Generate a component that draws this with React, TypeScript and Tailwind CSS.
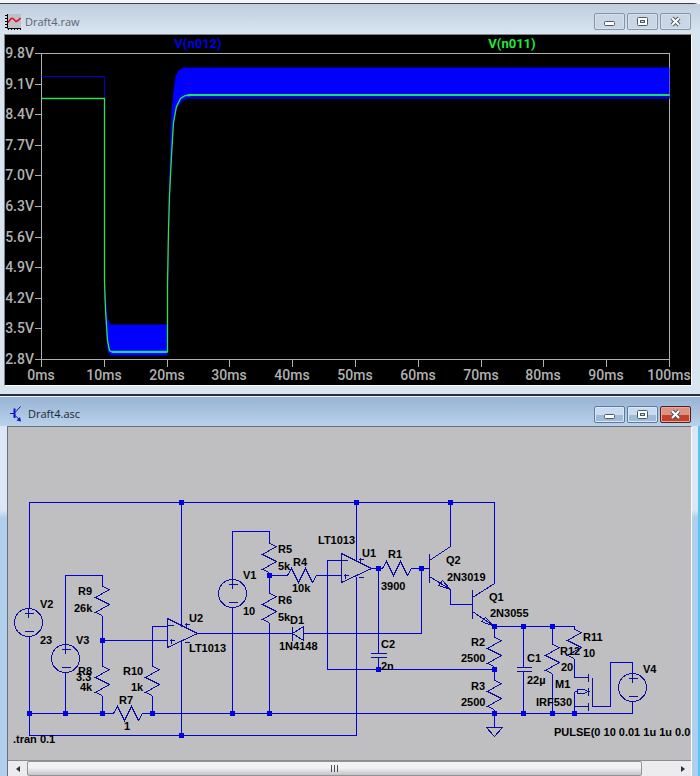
import * as React from 'react';

type ChromeProps = {
  title: string;
  icon: React.ReactNode;
  active?: boolean;
};

const WaveIcon = () => (
  <svg width="16" height="16" viewBox="0 0 16 16" aria-hidden="true">
    <rect x="2" y="0" width="14" height="14" fill="#c0c0c4" />
    <path d="M2.5 0V14.5H16" fill="none" stroke="#000" />
    <path d="M0 1.5H2M0 4.5H2M0 7.5H2M0 10.5H2M0 13.5H2M3.5 14V16M6.5 14V16M9.5 14V16M12.5 14V16M15.5 14V16" stroke="#000" />
    <path d="M3 8.5L6 4.5L8 4.5L11 7.5L13 6.5L15.5 4" fill="none" stroke="#d8142c" strokeWidth="1.6" />
  </svg>
);

const TransistorIcon = () => (
  <svg width="16" height="16" viewBox="0 0 16 16" aria-hidden="true">
    <path d="M2 7.5H6" stroke="#1010c8" />
    <path d="M6.5 2.5V12" stroke="#1010c8" strokeWidth="2" />
    <path d="M7 6.5L12.5 0.5M7 9.5L12 14" stroke="#1010c8" fill="none" />
    <path d="M13 15.5L8.5 14.5L12 11Z" fill="#1010c8" />
  </svg>
);

const TitleBar = ({ title, icon, active }: ChromeProps) => {
  const button = active
    ? 'flex h-[17px] w-[31px] items-center justify-center rounded-[2px] border border-[#60799b] bg-linear-to-b from-[#c9dbef] from-50% to-[#9fbbdb] to-50% shadow-[inset_0_0_0_1px_#dbe8f6]'
    : 'flex h-[17px] w-[31px] items-center justify-center rounded-[2px] border border-[#8695a9] bg-[#c8d6e5] shadow-[inset_0_0_0_1px_#d5e0ec]';
  const close = active
    ? 'flex h-[17px] w-[31px] items-center justify-center rounded-[2px] border border-[#5c1a1c] bg-linear-to-b from-[#dd9384] from-50% to-[#c4412a] to-50% shadow-[inset_0_0_0_1px_#e5a99c]'
    : button;
  return (
    <header className={active
      ? 'flex h-[29px] items-center bg-linear-to-b from-[#98b4d4] to-[#b9d1ea] pt-[5px] pl-2 pr-[9px]'
      : 'flex h-[30px] items-center bg-linear-to-b from-[#bfcddd] to-[#d9e5f1] pt-[5px] pl-[5px] pr-[9px]'}
    >
      {icon}
      <h1 className={active
        ? "ml-1 flex-1 text-[11px] leading-4 font-['Open_Sans',sans-serif] text-[#1c2633]"
        : "ml-1 flex-1 text-[11px] leading-4 font-['Open_Sans',sans-serif] text-[#5a6570]"}
      >
        {title}
      </h1>
      <div className="flex gap-[2px]">
        <button className={button} aria-label="Minimize">
          <svg width="13" height="11" viewBox="0 0 13 11">
            <rect x="1.5" y="5.5" width="10" height="4" rx="1" fill="#fff" stroke="#4f5866" />
          </svg>
        </button>
        <button className={button} aria-label="Maximize">
          <svg width="13" height="11" viewBox="0 0 13 11">
            <rect x="1.5" y="1.5" width="10" height="8" rx="1" fill="#fff" stroke="#4f5866" />
            <rect x="4.5" y="4.5" width="4" height="2" fill="#c8d6e5" stroke="#4f5866" />
          </svg>
        </button>
        <button className={close} aria-label="Close">
          <svg width="13" height="11" viewBox="0 0 13 11">
            <path d="M3 2L10 9M10 2L3 9" stroke="#4f5866" strokeWidth="4" />
            <path d="M3 2L10 9M10 2L3 9" stroke="#fff" strokeWidth="2" />
          </svg>
        </button>
      </div>
    </header>
  );
};

const volts = ['9.8V', '9.1V', '8.4V', '7.7V', '7.0V', '6.3V', '5.6V', '4.9V', '4.2V', '3.5V', '2.8V'];
const times = ['0ms', '10ms', '20ms', '30ms', '40ms', '50ms', '60ms', '70ms', '80ms', '90ms', '100ms'];

const Plot = () => (
  <svg
    viewBox="5 35 686 350"
    className="block h-auto w-full bg-black font-['Roboto',sans-serif] font-medium"
    role="img"
    aria-label="V(n012) and V(n011) over time"
  >
    <g fontSize="14" fill="#b0b0b0">
      {volts.map((v, i) => (
        <text key={v} x="34" y={Math.round(58 + i * 30.6)} textAnchor="end">{v}</text>
      ))}
      {times.map((t, i) => (
        <text key={t} x={Math.round(41 + i * 62.8)} y="380" textAnchor="middle">{t}</text>
      ))}
    </g>
    <g fontSize="13" fontWeight="bold">
      <text x="198" y="48" textAnchor="middle" fill="#0000e0">V(n012)</text>
      <text x="512" y="48" textAnchor="middle" fill="#22e53c">V(n011)</text>
    </g>
    <g transform="translate(.5 .5)" fill="none">
      <g stroke="#b0b0b0" shapeRendering="crispEdges">
        <rect x="41" y="53" width="628" height="306" />
        {volts.map((v, i) => (
          <path key={v} d={`M34 ${Math.round(53 + i * 30.6)}H41`} />
        ))}
        {times.map((t, i) => (
          <path key={t} d={`M${Math.round(41 + i * 62.8)} 359V366`} />
        ))}
      </g>
      <path d="M41 76H104V300" stroke="#0000d0" />
      <path d="M105 290L107 318L110 324H167V355H110L107 351L105 320Z" fill="#0000ff" />
      <path d="M167 320L168 200L171 110L173 90L175 76L178 70L183 67H669V98H188L182 100L176 108L173 125L171 160L169 200Z" fill="#0000ff" />
      <path d="M190 97H669" stroke="#0000c4" strokeWidth="3" />
      <path d="M41 98H104V280L105 310L107 340L109 350L111 351H167V284L168 230L169 195L171 155L173 122L176 106L180 98L185 95L190 95" stroke="#2fe04c" strokeWidth="1.3" />
      <path d="M111 351.5H167" stroke="#14d894" strokeWidth="2" />
      <path d="M187 94.5H669" stroke="#16e05c" strokeWidth="2" />
    </g>
  </svg>
);

const ResistorV = ({ x, y }: { x: number; y: number }) => (
  <path d={`M${x} ${y}l7 3l-14 8l14 7l-14 8l7 3`} />
);

const ResistorH = ({ x, y }: { x: number; y: number }) => (
  <path d={`M${x} ${y}l4 -7l7 14l7 -14l7 14l4 -7`} />
);

const Source = ({ x, y }: { x: number; y: number }) => (
  <g>
    <circle cx={x} cy={y} r="14" />
    <path d={`M${x - 4} ${y - 9}h9M${x} ${y - 14}v9M${x - 4} ${y + 9}h9`} />
  </g>
);

// x, y is the top left corner of the triangle
const OpAmp = ({ x, y }: { x: number; y: number }) => (
  <g>
    <path d={`M${x} ${y}v29l30 -14Z`} />
    <path d={`M${x} ${y + 7}h6M${x + 2} ${y + 22}h5M${x + 4} ${y + 20}v5`} />
    <path d={`M${x + 17} ${y + 6}h5M${x + 19} ${y + 4}v5M${x + 17} ${y + 24}h5`} />
  </g>
);

const wires = [
  'M29 608V502H494V583',
  'M29 636V735H356V576',
  'M29 713H113M142 713H632V701',
  'M65 644V575H102V586M65 672V713',
  'M102 615V666M102 640H167M102 695V713',
  'M167 626H152V666M152 695V713',
  'M181 502V626M181 641V735',
  'M197 633H292M303 633H421V568',
  'M232 579V531H269V543M232 607V713',
  'M269 572V593M269 622V713M269 575H287',
  'M316 575H341M341 560H327V669H494',
  'M356 502V560M371 568H382M411 568H429',
  'M378 568V653M378 657V669',
  'M450 502V546M450 589V604H472',
  'M494 626V637M494 666V680M494 709V727',
  'M494 626H574V629M523 626V667M523 671V713',
  'M552 626V644M552 673V713',
  'M574 658V677M574 691V713',
  'M592 706H610V662H632V673',
];

const nodes = [
  [181, 502], [356, 502], [450, 502], [269, 575], [102, 640], [378, 568], [421, 568],
  [378, 669], [494, 669], [494, 626], [523, 626], [552, 626], [29, 713], [65, 713],
  [102, 713], [152, 713], [232, 713], [269, 713], [494, 713], [523, 713], [552, 713],
  [574, 713], [181, 735],
];

type Label = [string, number, number];

const labels: Label[] = [
  ['V2', 40, 608], ['23', 40, 644],
  ['R9', 78, 595], ['26k', 74, 612],
  ['V3', 76, 644], ['3.3', 76, 681],
  ['R8', 78, 675], ['4k', 80, 691],
  ['R10', 123, 675], ['1k', 131, 691],
  ['R7', 119, 704], ['1', 124, 730],
  ['.tran 0.1', 13, 743],
  ['U2', 189, 622], ['LT1013', 189, 652],
  ['V1', 243, 579], ['10', 243, 615],
  ['R5', 278, 553], ['5k', 278, 570],
  ['R4', 293, 566], ['10k', 292, 592],
  ['R6', 278, 604], ['5k', 278, 621],
  ['D1', 290, 624], ['1N4148', 279, 650],
  ['LT1013', 318, 544], ['U1', 362, 557],
  ['R1', 388, 558], ['3900', 381, 590],
  ['C2', 381, 648], ['2n', 381, 670],
  ['Q2', 446, 564], ['2N3019', 447, 581],
  ['Q1', 489, 601], ['2N3055', 490, 617],
  ['R2', 471, 646], ['2500', 461, 662],
  ['R3', 471, 690], ['2500', 461, 706],
  ['C1', 527, 662], ['22µ', 527, 684],
  ['R11', 583, 641], ['10', 583, 657],
  ['R12', 560, 655], ['20', 561, 671],
  ['M1', 555, 688], ['IRF530', 536, 706],
  ['V4', 643, 673],
  ['PULSE(0 10 0.01 1u 1u 0.0', 554, 736],
];

const Schematic = () => (
  <svg viewBox="8 427 683 333" className="block h-auto w-full bg-[#bfbfc1]" role="img" aria-label="Circuit schematic">
    <g transform="translate(.5 .5)" fill="none" shapeRendering="crispEdges">
      <g stroke="#0000d8">
        {wires.map((d) => <path key={d} d={d} />)}
      </g>
      <g stroke="#0c0ca0">
        <ResistorV x={102} y={586} />
        <ResistorV x={102} y={666} />
        <ResistorV x={152} y={666} />
        <ResistorV x={269} y={543} />
        <ResistorV x={269} y={593} />
        <ResistorV x={494} y={637} />
        <ResistorV x={494} y={680} />
        <ResistorV x={552} y={644} />
        <ResistorV x={574} y={629} />
        <ResistorH x={113} y={713} />
        <ResistorH x={287} y={575} />
        <ResistorH x={382} y={568} />
        <Source x={28} y={622} />
        <Source x={65} y={658} />
        <Source x={232} y={593} />
        <Source x={632} y={687} />
        <OpAmp x={167} y={618} />
        <OpAmp x={341} y={553} />
        <path d="M292 626V640M292 633L303 626V640Z" />
        <path d="M370 653H386M370 657H386M516 667H531M516 671H531" />
        <path d="M486 727H502L494 736Z" />
        {/* Q2, Q1 */}
        <path d="M429 553V582M429 560L450 546M429 576L450 589M450 589L438 585L442 580Z" />
        <path d="M472 589V618M472 597L494 583M472 611L494 626M494 626L481 621L485 617Z" />
        {/* M1 */}
        <path d="M588 673V681M588 687V695M588 702V710M592 677V706" />
        <path d="M574 677H588M574 706H588M574 691H577M577 689H583L588 691L583 693H577Z" />
      </g>
    </g>
    <g fill="#0000e0" shapeRendering="crispEdges">
      {nodes.map(([x, y]) => (
        <rect key={`${x}-${y}`} x={x - 2} y={y - 2} width="5" height="5" />
      ))}
    </g>
    <g fontSize="11" fontWeight="bold" fill="#000">
      {labels.map(([text, x, y]) => (
        <text key={`${x}-${y}`} x={x} y={y}>{text}</text>
      ))}
    </g>
  </svg>
);

const ScrollBar = () => (
  <div className="flex h-4 items-stretch border-t border-[#8c8c90] bg-[#ececee]">
    <button className="flex w-[19px] items-center justify-center" aria-label="Scroll left">
      <svg width="4" height="6" viewBox="0 0 4 6"><path d="M4 0V6L0 3Z" fill="#303030" /></svg>
    </button>
    <div className="flex flex-1">
      <div className="flex w-[95%] items-center justify-center gap-[2px] rounded-[2px] border border-[#939397] bg-linear-to-b from-[#f2f2f2] from-45% to-[#c4c4c8]">
        <span className="h-[7px] w-px bg-[#505050]" />
        <span className="h-[7px] w-px bg-[#505050]" />
        <span className="h-[7px] w-px bg-[#505050]" />
      </div>
    </div>
    <button className="flex w-[17px] items-center justify-center" aria-label="Scroll right">
      <svg width="4" height="6" viewBox="0 0 4 6"><path d="M0 0V6L4 3Z" fill="#303030" /></svg>
    </button>
  </div>
);

const App = () => (
  <main className="min-h-screen bg-[#f4f6f8] pt-[3px] font-['Liberation_Sans',Arial,sans-serif]">
    <section className="rounded-tr-md border-t border-[#3a3f48] bg-[#d8e5f1] pb-2">
      <TitleBar title="Draft4.raw" icon={<WaveIcon />} />
      <div className="pr-[8px] pl-[4px]">
        <div className="border border-t-[#80858b] border-r-white border-b-white border-l-[#80858b]">
          <Plot />
        </div>
      </div>
    </section>
    <section className="border-t-2 border-[#2b3038] bg-linear-to-b from-[#dbe7f4] from-30% to-[#b0cfec] to-32%">
      <div className="border-t border-[#e8f1fa]">
        <TitleBar title="Draft4.asc" icon={<TransistorIcon />} active />
      </div>
      <div className="border-r-2 border-[#5cc4ec] pr-[6px] pl-[7px]">
        <div className="border-t border-r border-l border-t-[#6a7078] border-r-white border-l-[#6a7078]">
          <Schematic />
          <ScrollBar />
        </div>
      </div>
    </section>
  </main>
);

export default App;
